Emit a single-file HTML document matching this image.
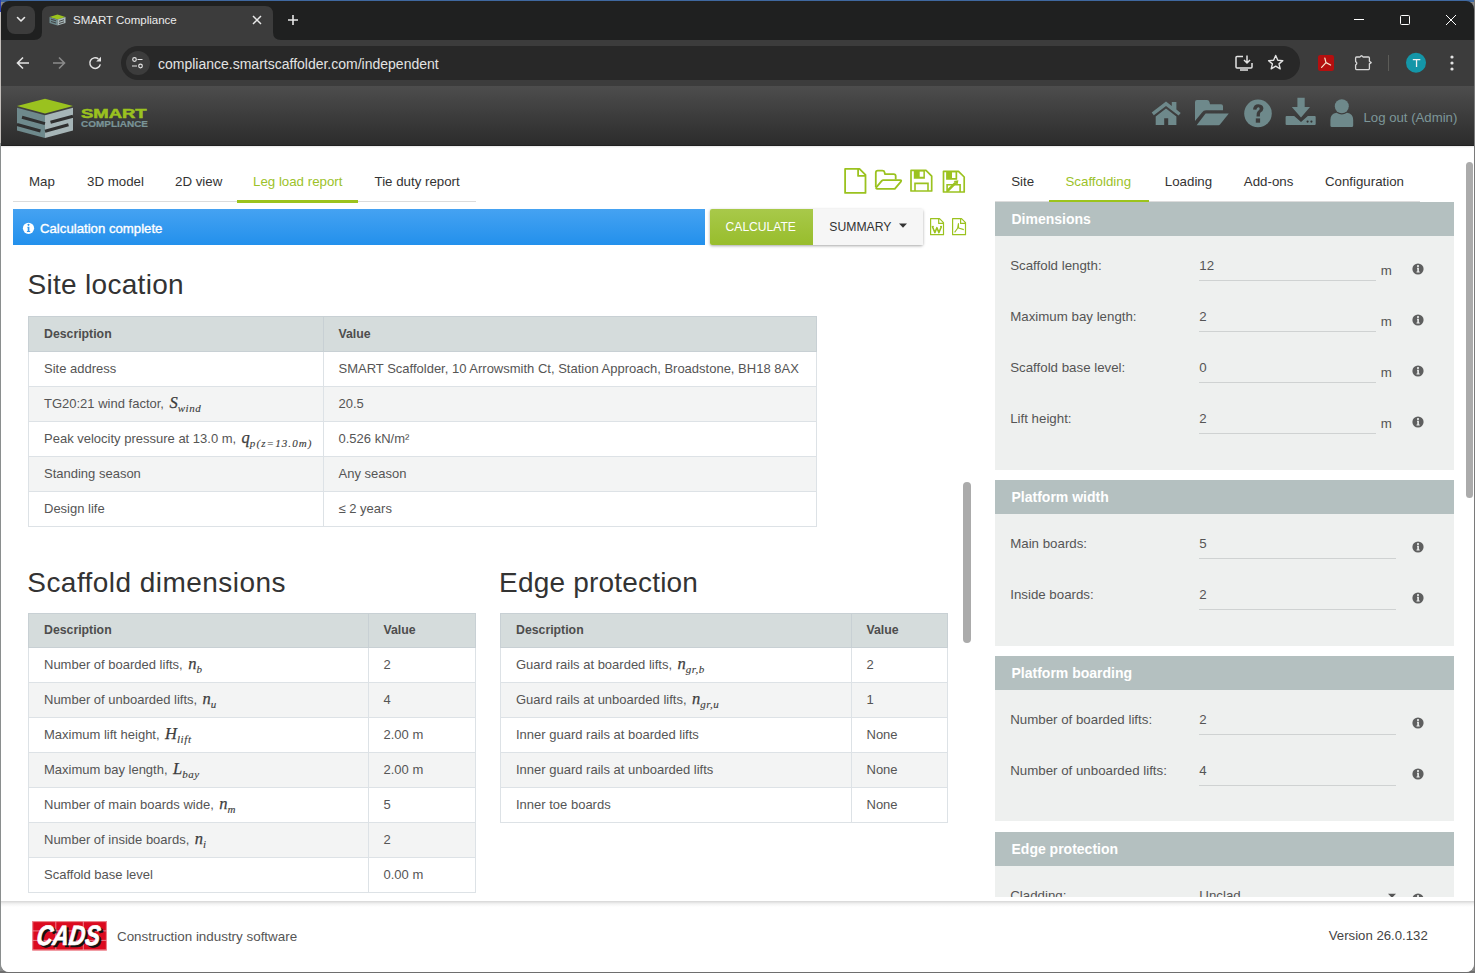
<!DOCTYPE html>
<html><head><meta charset="utf-8">
<style>
*{box-sizing:border-box;margin:0;padding:0}
html,body{width:1475px;height:973px;overflow:hidden;background:#8a8a8a;font-family:"Liberation Sans",sans-serif}
.a{position:absolute}
.t{position:absolute;white-space:nowrap;line-height:1}
svg{position:absolute;overflow:visible}
#win{position:absolute;left:0;top:0;width:1475px;height:973px;clip-path:inset(1px 1px 1px 1px round 8px);background:#1f2020}
</style></head>
<body>
<!-- desktop edges -->
<div class="a" style="left:0;top:0;width:1475px;height:2px;background:#3f68a0"></div>
<div class="a" style="left:0;top:0;width:1px;height:12px;background:#2d3fae"></div>
<div class="a" style="left:0;top:12px;width:1px;height:131px;background:#c4bfbb"></div>
<div class="a" style="left:0;top:143px;width:1px;height:830px;background:#8a8e8e"></div>
<div class="a" style="left:1474px;top:0;width:1px;height:973px;background:#7a7a7a"></div>
<div class="a" style="left:0;top:971px;width:1475px;height:2px;background:#6e6e6e"></div>

<div id="win">
  <!-- tab strip -->
  <div class="a" style="left:7px;top:6px;width:28px;height:28px;border-radius:8px;background:#3c3c3c"></div>
  <svg style="left:0;top:0" width="1475" height="40">
    <path d="M17.5 17.5 L21 21 L24.5 17.5" stroke="#e8e8e8" stroke-width="1.6" fill="none" stroke-linecap="round" stroke-linejoin="round"/>
    <!-- active tab shape -->
    <path d="M34 40 Q42 40 42 32 L42 14 Q42 6 50 6 L265 6 Q273 6 273 14 L273 32 Q273 40 281 40 Z" fill="#3c3c3c"/>
    <!-- close x -->
    <path d="M253 16 L261 24 M261 16 L253 24" stroke="#e8e8e8" stroke-width="1.5"/>
    <!-- plus -->
    <path d="M293 15 L293 25 M288 20 L298 20" stroke="#e8e8e8" stroke-width="1.6"/>
    <!-- window controls -->
    <path d="M1354 19.5 L1364 19.5" stroke="#fff" stroke-width="1"/>
    <rect x="1400.5" y="15.5" width="9" height="9" rx="1" stroke="#fff" stroke-width="1" fill="none"/>
    <path d="M1446 15 L1456 25 M1456 15 L1446 25" stroke="#fff" stroke-width="1"/>
  </svg>
  <!-- favicon -->
  <svg style="left:49px;top:14px" width="17" height="12" viewBox="0 0 17 12">
    <path d="M0.5 3 L8.5 0.5 L16.5 3 L8.5 5.5 Z" fill="#9bc31c"/>
    <path d="M0.5 3 L8.5 5.5 L8.5 11.5 L0.5 9 Z" fill="#6f8a8e"/>
    <path d="M8.5 5.5 L16.5 3 L16.5 9 L8.5 11.5 Z" fill="#a9b8ba"/>
    <path d="M2 5.2 L7 6.8 M2 7.5 L7 9 M10 7.3 L15 5.7 M10 9.5 L15 7.9" stroke="#3c3c3c" stroke-width="0.9"/>
  </svg>
  <div class="t" style="left:73px;top:15.2px;font-size:11.5px;color:#ececec">SMART Compliance</div>

  <!-- toolbar -->
  <div class="a" style="left:0;top:40px;width:1475px;height:46px;background:#3c3c3c"></div>
  <div class="a" style="left:121px;top:46px;width:1179px;height:34px;border-radius:17px;background:#282828"></div>
  <div class="a" style="left:126px;top:51px;width:24px;height:24px;border-radius:12px;background:#3c3c3c"></div>
  <svg style="left:0;top:40px" width="1475" height="46">
    <!-- back -->
    <path d="M29 23 L17.5 23 M23 17.5 L17.5 23 L23 28.5" stroke="#e3e3e3" stroke-width="1.6" fill="none"/>
    <!-- forward -->
    <path d="M53 23 L64.5 23 M59 17.5 L64.5 23 L59 28.5" stroke="#8a8a8a" stroke-width="1.6" fill="none"/>
    <!-- reload -->
    <path d="M98.4 18.9 A5.3 5.3 0 1 0 100.3 24.3" stroke="#e3e3e3" stroke-width="1.5" fill="none"/>
    <path d="M96.2 21.6 L101 21.6 L101 16.8 Z" fill="#e3e3e3"/>
    <!-- tune icon -->
    <circle cx="134.5" cy="19.5" r="1.8" stroke="#e3e3e3" stroke-width="1.2" fill="none"/>
    <path d="M137.5 19.5 L142.5 19.5 M132 26 L137 26" stroke="#e3e3e3" stroke-width="1.2"/>
    <circle cx="140.5" cy="26" r="1.8" stroke="#e3e3e3" stroke-width="1.2" fill="none"/>
    <!-- install -->
    <path d="M1243 16.5 L1237 16.5 Q1236 16.5 1236 17.5 L1236 27 Q1236 28 1237 28 L1251 28 Q1252 28 1252 27 L1252 23" stroke="#e3e3e3" stroke-width="1.5" fill="none"/>
    <path d="M1240 30 L1248 30" stroke="#e3e3e3" stroke-width="1.5"/>
    <path d="M1247 15.5 L1247 23 M1244 20 L1247 23 L1250 20" stroke="#e3e3e3" stroke-width="1.5" fill="none"/>
    <!-- star -->
    <path d="M1275.7 15.5 L1277.8 20.2 L1282.8 20.6 L1279 23.9 L1280.2 28.8 L1275.7 26.2 L1271.2 28.8 L1272.4 23.9 L1268.6 20.6 L1273.6 20.2 Z" stroke="#e3e3e3" stroke-width="1.4" fill="none" stroke-linejoin="round"/>
    <!-- pdf ext -->
    <rect x="1318" y="15" width="16" height="16" rx="2.2" fill="#b40f0f"/>
    <path d="M1326 22.6 L1324.8 18 M1326 22.6 L1321.6 27.4 M1326 22.6 L1330.6 25" stroke="#f4e6d0" stroke-width="1.2" fill="none" stroke-linecap="round"/>
    <!-- puzzle -->
    <path d="M1356.5 17 L1360 17 Q1361.5 14.5 1363 17 L1368.5 17 Q1369.4 17 1369.4 18 L1369.4 21.3 L1371.2 22.6 L1369.4 23.9 L1369.4 28.6 Q1369.4 29.6 1368.5 29.6 L1356.5 29.6 Q1355.6 29.6 1355.6 28.6 L1355.6 25 Q1358 23.3 1355.6 21.6 L1355.6 18 Q1355.6 17 1356.5 17 Z" stroke="#d6d6d6" stroke-width="1.3" fill="none" stroke-linejoin="round"/>
    <!-- separator -->
    <path d="M1388.5 15 L1388.5 31" stroke="#5c5c58" stroke-width="1"/>
    <!-- avatar -->
    <circle cx="1416" cy="22.7" r="10" fill="#1496a8"/>
    <path d="M1412.8 19.6 L1420.3 19.6 M1416.55 19.6 L1416.55 26.9" stroke="#f0f0f0" stroke-width="1.3"/>
    <!-- menu -->
    <circle cx="1452" cy="17" r="1.6" fill="#e3e3e3"/>
    <circle cx="1452" cy="23" r="1.6" fill="#e3e3e3"/>
    <circle cx="1452" cy="29" r="1.6" fill="#e3e3e3"/>
  </svg>
  <div class="t" style="left:158px;top:56.8px;font-size:14px;color:#e3e3e3">compliance.smartscaffolder.com/independent</div>

<div class="a" style="left:0;top:86px;width:1475px;height:60px;background:linear-gradient(#4d4d4d,#2b2b2b)"></div>
<svg style="left:0;top:0" width="1475" height="146">
 <path d="M17 106 L45 98.8 L73 106 L45 113.5 Z" fill="#9ac21f"/>
 <path d="M17 107.8 L45 115.3 L45 138 L17 130.5 Z" fill="#6e898c"/>
 <path d="M45 115.3 L73 107.8 L73 130.5 L45 138 Z" fill="#a6b5b7"/>
 <path d="M22 117.3 L45 123.6 M17 124.5 L40.5 131 M50.5 122.3 L73 116.2 M45 131.2 L68.5 124.8" stroke="#2f2f2f" stroke-width="3"/>
</svg>
<div class="t" style="left:81px;top:108.3px;font-size:12.3px;font-weight:bold;color:#9ac21f;-webkit-text-stroke:0.5px #9ac21f;transform:scaleX(1.5);transform-origin:0 0;letter-spacing:0">SMART</div>
<div class="t" style="left:81px;top:119.5px;font-size:8.6px;font-weight:bold;color:#7a9497;-webkit-text-stroke:0.2px #7a9497;transform:scaleX(1.16);transform-origin:0 0">COMPLIANCE</div>
<svg style="left:0;top:0" width="1475" height="146">
 <!-- home -->
 <path d="M1151.7 112.5 L1166 101.5 L1171.8 106 L1171.8 102 L1176.4 102 L1176.4 109.6 L1180.7 112.9 L1178.6 115.6 L1166 105.9 L1153.8 115.3 Z" fill="#6e898b"/>
 <path d="M1155.7 116.6 L1166 108.6 L1176.4 116.6 L1176.4 125 L1168.2 125 L1168.2 118.2 L1164.2 118.2 L1164.2 125 L1155.7 125 Z" fill="#6e898b"/>
 <!-- folder open -->
 <path d="M1195 102 Q1195 100 1197 100 L1207 100 Q1209 100 1209.5 102 L1210 104.2 L1221 104.2 Q1223 104.2 1223 106.2 L1223 110.3 L1206 110.3 Q1203.5 110.3 1202 112.5 L1195 121 Z" fill="#6e898b"/>
 <path d="M1205.6 113.6 L1228.8 113.6 L1220 124.6 Q1219.4 125.2 1218.5 125.2 L1196.6 125.2 Z" fill="#6e898b"/>
 <!-- question circle -->
 <circle cx="1258" cy="113.4" r="13.8" fill="#6e898b"/>
 <path d="M1253 109.6 Q1253.6 104.2 1258.5 104.3 Q1263.4 104.6 1263.4 108.6 Q1263.2 111.4 1260.5 112.6 Q1259.8 113.1 1259.9 116.4 L1256.5 116.4 Q1256.3 112.6 1257.9 111.1 Q1259.6 110 1259.7 108.7 Q1259.5 107.3 1258.3 107.3 Q1256.9 107.4 1256.3 109.8 Z" fill="#3c3c3c"/>
 <rect x="1255.8" y="118.4" width="4.3" height="4.3" fill="#3c3c3c"/>
 <!-- download -->
 <path d="M1297.4 97.7 L1304.7 97.7 L1304.7 107 L1310 107 L1301 117.5 L1291.8 107 L1297.4 107 Z" fill="#6e898b"/>
 <path d="M1285.6 117 Q1285.6 116 1286.6 116 L1294.2 116 L1301 122 L1307.8 116 L1314.7 116 Q1315.7 116 1315.7 117 L1315.7 124 Q1315.7 125 1314.7 125 L1286.6 125 Q1285.6 125 1285.6 124 Z" fill="#6e898b"/>
 <circle cx="1307.6" cy="121.6" r="1.1" fill="#333"/><circle cx="1311.4" cy="121.6" r="1.1" fill="#333"/>
 <!-- user -->
 <circle cx="1341.8" cy="106.3" r="7" fill="#6e898b"/>
 <path d="M1336.5 112.8 Q1341.8 116 1347 112.8 Q1353.2 113.5 1353.2 120 L1353.2 125.5 Q1353.2 127 1351.7 127 L1331.9 127 Q1330.4 127 1330.4 125.5 L1330.4 120 Q1330.4 113.5 1336.5 112.8 Z" fill="#6e898b"/>
</svg>
<div class="t" style="left:1363.5px;top:111.13px;font-size:13.2px;color:#7d9799;">Log out (Admin)</div>
<div class="a" style="left:0;top:146px;width:1475px;height:827px;background:#fff"></div>
<div class="a" style="left:0;top:145px;width:1475px;height:1px;background:#202020"></div>
<div class="a" style="left:0;top:146px;width:1475px;height:2px;background:linear-gradient(#e6e6e6,#fff)"></div>
<div class="t" style="left:29px;top:174.74px;font-size:13.3px;color:#333;">Map</div>
<div class="t" style="left:87px;top:174.74px;font-size:13.3px;color:#333;">3D model</div>
<div class="t" style="left:175px;top:174.74px;font-size:13.3px;color:#333;">2D view</div>
<div class="t" style="left:253px;top:174.74px;font-size:13.3px;color:#9cc22a;">Leg load report</div>
<div class="t" style="left:374.5px;top:174.74px;font-size:13.3px;color:#333;">Tie duty report</div>
<div class="a" style="left:13px;top:201px;width:463px;height:1px;background:#dcdcdc"></div>
<div class="a" style="left:237px;top:200px;width:121px;height:2.5px;background:#9cc31c"></div>
<div class="a" style="left:13px;top:209px;width:692px;height:36px;background:linear-gradient(#45a2f2,#2390ec)"></div>
<svg style="left:0;top:0" width="40" height="250"><circle cx="28.5" cy="228.3" r="5.6" fill="#fff"/><path d="M27.6 226.8 L29.4 226.8 L29.4 231 L30.2 231 L30.2 231.9 L26.9 231.9 L26.9 231 L27.7 231 L27.7 227.7 L27.1 227.7 Z M28.5 223.8 a1 1 0 1 0 0.01 0" fill="#2f97ee"/></svg>
<div class="t" style="left:40px;top:221.83px;font-size:13.2px;color:#fff;-webkit-text-stroke:0.35px #fff">Calculation complete</div>
<div class="a" style="left:710px;top:209px;width:213px;height:36px;border-radius:2px;box-shadow:0 1px 3px rgba(0,0,0,0.35)"></div>
<div class="a" style="left:710px;top:209px;width:103px;height:36px;border-radius:2px 0 0 2px;background:linear-gradient(#a8c94a,#98bd2c)"></div>
<div class="a" style="left:813px;top:209px;width:110px;height:36px;background:#f6f6f6"></div>
<div class="t" style="left:725.6px;top:220.76px;font-size:12.1px;color:#fff;">CALCULATE</div>
<div class="t" style="left:829.3px;top:220.67px;font-size:12.2px;color:#333;">SUMMARY</div>
<svg style="left:0;top:0" width="1000" height="250"><path d="M899 223.6 L907 223.6 L903 227.8 Z" fill="#333"/></svg>
<div class="t" style="left:27.5px;top:271.30px;font-size:28px;color:#333;letter-spacing:0.3px">Site location</div>
<div class="a" style="left:28px;top:316px;width:789px;height:211px;border:1px solid #dde2e6;background:#fff"></div>
<div class="a" style="left:28px;top:316px;width:789px;height:36px;border:1px solid #c8d0d4;background:#d5dcdc"></div>
<div class="a" style="left:29px;top:352px;width:787px;height:34px;background:#fff"></div>
<div class="a" style="left:29px;top:387px;width:787px;height:34px;background:#f3f4f4"></div>
<div class="a" style="left:29px;top:386px;width:787px;height:1px;background:#dde2e6"></div>
<div class="a" style="left:29px;top:422px;width:787px;height:34px;background:#fff"></div>
<div class="a" style="left:29px;top:421px;width:787px;height:1px;background:#dde2e6"></div>
<div class="a" style="left:29px;top:457px;width:787px;height:34px;background:#f3f4f4"></div>
<div class="a" style="left:29px;top:456px;width:787px;height:1px;background:#dde2e6"></div>
<div class="a" style="left:29px;top:492px;width:787px;height:34px;background:#fff"></div>
<div class="a" style="left:29px;top:491px;width:787px;height:1px;background:#dde2e6"></div>
<div class="a" style="left:323px;top:317px;width:1px;height:35px;background:#c8d0d4"></div>
<div class="a" style="left:323px;top:352px;width:1px;height:175px;background:#dde2e6"></div>
<div class="t" style="left:44px;top:327.99px;font-size:12.3px;color:#4d4d4d;font-weight:bold;">Description</div>
<div class="t" style="left:338.5px;top:327.99px;font-size:12.3px;color:#4d4d4d;font-weight:bold;">Value</div>
<div class="t" style="left:44px;top:362.00px;font-size:13px;color:#555;">Site address</div>
<div class="t" style="left:338.5px;top:362.00px;font-size:13px;color:#555;">SMART Scaffolder, 10 Arrowsmith Ct, Station Approach, Broadstone, BH18 8AX</div>
<div class="t" style="left:44px;top:397.00px;font-size:13px;color:#555;">TG20:21 wind factor, <span style="font-family:'Liberation Serif';font-style:italic;font-size:16.5px;color:#3c3c3c;margin-left:1.8px;line-height:0;-webkit-text-stroke:0.25px #3c3c3c">S</span><span style="font-family:'Liberation Serif';font-style:italic;font-size:11px;color:#3c3c3c;line-height:0;position:relative;top:3.5px;letter-spacing:0.6px;-webkit-text-stroke:0.12px #3c3c3c">wind</span></div>
<div class="t" style="left:338.5px;top:397.00px;font-size:13px;color:#555;">20.5</div>
<div class="t" style="left:44px;top:432.00px;font-size:13px;color:#555;">Peak velocity pressure at 13.0 m, <span style="font-family:'Liberation Serif';font-style:italic;font-size:16.5px;color:#3c3c3c;margin-left:1.8px;line-height:0;-webkit-text-stroke:0.25px #3c3c3c">q</span><span style="font-family:'Liberation Serif';font-style:italic;font-size:11px;color:#3c3c3c;line-height:0;position:relative;top:3.5px;letter-spacing:1.1px;-webkit-text-stroke:0.12px #3c3c3c">p(z=13.0m)</span></div>
<div class="t" style="left:338.5px;top:432.00px;font-size:13px;color:#555;">0.526 kN/m²</div>
<div class="t" style="left:44px;top:467.00px;font-size:13px;color:#555;">Standing season</div>
<div class="t" style="left:338.5px;top:467.00px;font-size:13px;color:#555;">Any season</div>
<div class="t" style="left:44px;top:502.00px;font-size:13px;color:#555;">Design life</div>
<div class="t" style="left:338.5px;top:502.00px;font-size:13px;color:#555;">≤ 2 years</div>
<div class="t" style="left:27.3px;top:568.80px;font-size:28px;color:#333;letter-spacing:0.45px">Scaffold dimensions</div>
<div class="a" style="left:28px;top:613px;width:448px;height:280px;border:1px solid #dde2e6;background:#fff"></div>
<div class="a" style="left:28px;top:613px;width:448px;height:35px;border:1px solid #c8d0d4;background:#d5dcdc"></div>
<div class="a" style="left:29px;top:648px;width:446px;height:34px;background:#fff"></div>
<div class="a" style="left:29px;top:683px;width:446px;height:34px;background:#f3f4f4"></div>
<div class="a" style="left:29px;top:682px;width:446px;height:1px;background:#dde2e6"></div>
<div class="a" style="left:29px;top:718px;width:446px;height:34px;background:#fff"></div>
<div class="a" style="left:29px;top:717px;width:446px;height:1px;background:#dde2e6"></div>
<div class="a" style="left:29px;top:753px;width:446px;height:34px;background:#f3f4f4"></div>
<div class="a" style="left:29px;top:752px;width:446px;height:1px;background:#dde2e6"></div>
<div class="a" style="left:29px;top:788px;width:446px;height:34px;background:#fff"></div>
<div class="a" style="left:29px;top:787px;width:446px;height:1px;background:#dde2e6"></div>
<div class="a" style="left:29px;top:823px;width:446px;height:34px;background:#f3f4f4"></div>
<div class="a" style="left:29px;top:822px;width:446px;height:1px;background:#dde2e6"></div>
<div class="a" style="left:29px;top:858px;width:446px;height:34px;background:#fff"></div>
<div class="a" style="left:29px;top:857px;width:446px;height:1px;background:#dde2e6"></div>
<div class="a" style="left:368px;top:614px;width:1px;height:34px;background:#c8d0d4"></div>
<div class="a" style="left:368px;top:648px;width:1px;height:245px;background:#dde2e6"></div>
<div class="t" style="left:44px;top:623.99px;font-size:12.3px;color:#4d4d4d;font-weight:bold;">Description</div>
<div class="t" style="left:383.5px;top:623.99px;font-size:12.3px;color:#4d4d4d;font-weight:bold;">Value</div>
<div class="t" style="left:44px;top:658.00px;font-size:13px;color:#555;">Number of boarded lifts, <span style="font-family:'Liberation Serif';font-style:italic;font-size:16.5px;color:#3c3c3c;margin-left:1.8px;line-height:0;-webkit-text-stroke:0.25px #3c3c3c">n</span><span style="font-family:'Liberation Serif';font-style:italic;font-size:11px;color:#3c3c3c;line-height:0;position:relative;top:3.5px;letter-spacing:0.6px;-webkit-text-stroke:0.12px #3c3c3c">b</span></div>
<div class="t" style="left:383.5px;top:658.00px;font-size:13px;color:#555;">2</div>
<div class="t" style="left:44px;top:693.00px;font-size:13px;color:#555;">Number of unboarded lifts, <span style="font-family:'Liberation Serif';font-style:italic;font-size:16.5px;color:#3c3c3c;margin-left:1.8px;line-height:0;-webkit-text-stroke:0.25px #3c3c3c">n</span><span style="font-family:'Liberation Serif';font-style:italic;font-size:11px;color:#3c3c3c;line-height:0;position:relative;top:3.5px;letter-spacing:0.6px;-webkit-text-stroke:0.12px #3c3c3c">u</span></div>
<div class="t" style="left:383.5px;top:693.00px;font-size:13px;color:#555;">4</div>
<div class="t" style="left:44px;top:728.00px;font-size:13px;color:#555;">Maximum lift height, <span style="font-family:'Liberation Serif';font-style:italic;font-size:16.5px;color:#3c3c3c;margin-left:1.8px;line-height:0;-webkit-text-stroke:0.25px #3c3c3c">H</span><span style="font-family:'Liberation Serif';font-style:italic;font-size:11px;color:#3c3c3c;line-height:0;position:relative;top:3.5px;letter-spacing:0.6px;-webkit-text-stroke:0.12px #3c3c3c">lift</span></div>
<div class="t" style="left:383.5px;top:728.00px;font-size:13px;color:#555;">2.00 m</div>
<div class="t" style="left:44px;top:763.00px;font-size:13px;color:#555;">Maximum bay length, <span style="font-family:'Liberation Serif';font-style:italic;font-size:16.5px;color:#3c3c3c;margin-left:1.8px;line-height:0;-webkit-text-stroke:0.25px #3c3c3c">L</span><span style="font-family:'Liberation Serif';font-style:italic;font-size:11px;color:#3c3c3c;line-height:0;position:relative;top:3.5px;letter-spacing:0.6px;-webkit-text-stroke:0.12px #3c3c3c">bay</span></div>
<div class="t" style="left:383.5px;top:763.00px;font-size:13px;color:#555;">2.00 m</div>
<div class="t" style="left:44px;top:798.00px;font-size:13px;color:#555;">Number of main boards wide, <span style="font-family:'Liberation Serif';font-style:italic;font-size:16.5px;color:#3c3c3c;margin-left:1.8px;line-height:0;-webkit-text-stroke:0.25px #3c3c3c">n</span><span style="font-family:'Liberation Serif';font-style:italic;font-size:11px;color:#3c3c3c;line-height:0;position:relative;top:3.5px;letter-spacing:0.6px;-webkit-text-stroke:0.12px #3c3c3c">m</span></div>
<div class="t" style="left:383.5px;top:798.00px;font-size:13px;color:#555;">5</div>
<div class="t" style="left:44px;top:833.00px;font-size:13px;color:#555;">Number of inside boards, <span style="font-family:'Liberation Serif';font-style:italic;font-size:16.5px;color:#3c3c3c;margin-left:1.8px;line-height:0;-webkit-text-stroke:0.25px #3c3c3c">n</span><span style="font-family:'Liberation Serif';font-style:italic;font-size:11px;color:#3c3c3c;line-height:0;position:relative;top:3.5px;letter-spacing:0.6px;-webkit-text-stroke:0.12px #3c3c3c">i</span></div>
<div class="t" style="left:383.5px;top:833.00px;font-size:13px;color:#555;">2</div>
<div class="t" style="left:44px;top:868.00px;font-size:13px;color:#555;">Scaffold base level</div>
<div class="t" style="left:383.5px;top:868.00px;font-size:13px;color:#555;">0.00 m</div>
<div class="t" style="left:499px;top:568.80px;font-size:28px;color:#333;letter-spacing:0.2px">Edge protection</div>
<div class="a" style="left:500px;top:613px;width:448px;height:210px;border:1px solid #dde2e6;background:#fff"></div>
<div class="a" style="left:500px;top:613px;width:448px;height:35px;border:1px solid #c8d0d4;background:#d5dcdc"></div>
<div class="a" style="left:501px;top:648px;width:446px;height:34px;background:#fff"></div>
<div class="a" style="left:501px;top:683px;width:446px;height:34px;background:#f3f4f4"></div>
<div class="a" style="left:501px;top:682px;width:446px;height:1px;background:#dde2e6"></div>
<div class="a" style="left:501px;top:718px;width:446px;height:34px;background:#fff"></div>
<div class="a" style="left:501px;top:717px;width:446px;height:1px;background:#dde2e6"></div>
<div class="a" style="left:501px;top:753px;width:446px;height:34px;background:#f3f4f4"></div>
<div class="a" style="left:501px;top:752px;width:446px;height:1px;background:#dde2e6"></div>
<div class="a" style="left:501px;top:788px;width:446px;height:34px;background:#fff"></div>
<div class="a" style="left:501px;top:787px;width:446px;height:1px;background:#dde2e6"></div>
<div class="a" style="left:851px;top:614px;width:1px;height:34px;background:#c8d0d4"></div>
<div class="a" style="left:851px;top:648px;width:1px;height:175px;background:#dde2e6"></div>
<div class="t" style="left:516px;top:623.99px;font-size:12.3px;color:#4d4d4d;font-weight:bold;">Description</div>
<div class="t" style="left:866.5px;top:623.99px;font-size:12.3px;color:#4d4d4d;font-weight:bold;">Value</div>
<div class="t" style="left:516px;top:658.00px;font-size:13px;color:#555;">Guard rails at boarded lifts, <span style="font-family:'Liberation Serif';font-style:italic;font-size:16.5px;color:#3c3c3c;margin-left:1.8px;line-height:0;-webkit-text-stroke:0.25px #3c3c3c">n</span><span style="font-family:'Liberation Serif';font-style:italic;font-size:11px;color:#3c3c3c;line-height:0;position:relative;top:3.5px;letter-spacing:0.6px;-webkit-text-stroke:0.12px #3c3c3c">gr,b</span></div>
<div class="t" style="left:866.5px;top:658.00px;font-size:13px;color:#555;">2</div>
<div class="t" style="left:516px;top:693.00px;font-size:13px;color:#555;">Guard rails at unboarded lifts, <span style="font-family:'Liberation Serif';font-style:italic;font-size:16.5px;color:#3c3c3c;margin-left:1.8px;line-height:0;-webkit-text-stroke:0.25px #3c3c3c">n</span><span style="font-family:'Liberation Serif';font-style:italic;font-size:11px;color:#3c3c3c;line-height:0;position:relative;top:3.5px;letter-spacing:0.6px;-webkit-text-stroke:0.12px #3c3c3c">gr,u</span></div>
<div class="t" style="left:866.5px;top:693.00px;font-size:13px;color:#555;">1</div>
<div class="t" style="left:516px;top:728.00px;font-size:13px;color:#555;">Inner guard rails at boarded lifts</div>
<div class="t" style="left:866.5px;top:728.00px;font-size:13px;color:#555;">None</div>
<div class="t" style="left:516px;top:763.00px;font-size:13px;color:#555;">Inner guard rails at unboarded lifts</div>
<div class="t" style="left:866.5px;top:763.00px;font-size:13px;color:#555;">None</div>
<div class="t" style="left:516px;top:798.00px;font-size:13px;color:#555;">Inner toe boards</div>
<div class="t" style="left:866.5px;top:798.00px;font-size:13px;color:#555;">None</div>
<div class="a" style="left:963px;top:482px;width:8px;height:161px;border-radius:4px;background:#ababab"></div>
<div class="t" style="left:1011.2px;top:174.74px;font-size:13.3px;color:#333;">Site</div>
<div class="t" style="left:1065.5px;top:174.74px;font-size:13.3px;color:#9cc22a;">Scaffolding</div>
<div class="t" style="left:1164.8px;top:174.74px;font-size:13.3px;color:#333;">Loading</div>
<div class="t" style="left:1243.8px;top:174.74px;font-size:13.3px;color:#333;">Add-ons</div>
<div class="t" style="left:1324.9px;top:174.74px;font-size:13.3px;color:#333;">Configuration</div>
<div class="a" style="left:995px;top:201px;width:425px;height:1px;background:#dcdcdc"></div>
<div class="a" style="left:1049px;top:200px;width:100px;height:2px;background:#9cc31c"></div>
<div class="a" style="left:995px;top:202px;width:459px;height:695px;overflow:hidden">
<div class="a" style="left:0;top:0px;width:459px;height:34px;background:#b4c0c0"></div>
<div class="a" style="left:0;top:34px;width:459px;height:233.5px;background:#eef0ef"></div>
<div class="t" style="left:16.5px;top:10.15px;font-size:14px;color:#fff;font-weight:bold;">Dimensions</div>
<div class="t" style="left:15.2px;top:56.74px;font-size:13.3px;color:#555;">Scaffold length:</div>
<div class="t" style="left:204.3px;top:56.74px;font-size:13.3px;color:#555;">12</div>
<div class="a" style="left:204px;top:78px;width:177px;height:1px;background:#cfd2d2"></div>
<div class="t" style="left:385.7px;top:61.74px;font-size:13.3px;color:#555;">m</div>
<svg style="left:416.5px;top:60.8px" width="12" height="12" viewBox="0 0 12 12"><circle cx="6" cy="6" r="5.6" fill="#5e5f5f"/><path d="M5 4.8 L6.9 4.8 L6.9 8.6 L7.7 8.6 L7.7 9.5 L4.5 9.5 L4.5 8.6 L5.3 8.6 L5.3 5.7 L5 5.7 Z" fill="#eef0ef"/><circle cx="6" cy="3.1" r="1.05" fill="#eef0ef"/></svg>
<div class="t" style="left:15.2px;top:107.74px;font-size:13.3px;color:#555;">Maximum bay length:</div>
<div class="t" style="left:204.3px;top:107.74px;font-size:13.3px;color:#555;">2</div>
<div class="a" style="left:204px;top:129px;width:177px;height:1px;background:#cfd2d2"></div>
<div class="t" style="left:385.7px;top:112.74px;font-size:13.3px;color:#555;">m</div>
<svg style="left:416.5px;top:111.8px" width="12" height="12" viewBox="0 0 12 12"><circle cx="6" cy="6" r="5.6" fill="#5e5f5f"/><path d="M5 4.8 L6.9 4.8 L6.9 8.6 L7.7 8.6 L7.7 9.5 L4.5 9.5 L4.5 8.6 L5.3 8.6 L5.3 5.7 L5 5.7 Z" fill="#eef0ef"/><circle cx="6" cy="3.1" r="1.05" fill="#eef0ef"/></svg>
<div class="t" style="left:15.2px;top:158.74px;font-size:13.3px;color:#555;">Scaffold base level:</div>
<div class="t" style="left:204.3px;top:158.74px;font-size:13.3px;color:#555;">0</div>
<div class="a" style="left:204px;top:180px;width:177px;height:1px;background:#cfd2d2"></div>
<div class="t" style="left:385.7px;top:163.74px;font-size:13.3px;color:#555;">m</div>
<svg style="left:416.5px;top:162.8px" width="12" height="12" viewBox="0 0 12 12"><circle cx="6" cy="6" r="5.6" fill="#5e5f5f"/><path d="M5 4.8 L6.9 4.8 L6.9 8.6 L7.7 8.6 L7.7 9.5 L4.5 9.5 L4.5 8.6 L5.3 8.6 L5.3 5.7 L5 5.7 Z" fill="#eef0ef"/><circle cx="6" cy="3.1" r="1.05" fill="#eef0ef"/></svg>
<div class="t" style="left:15.2px;top:209.74px;font-size:13.3px;color:#555;">Lift height:</div>
<div class="t" style="left:204.3px;top:209.74px;font-size:13.3px;color:#555;">2</div>
<div class="a" style="left:204px;top:231px;width:177px;height:1px;background:#cfd2d2"></div>
<div class="t" style="left:385.7px;top:214.74px;font-size:13.3px;color:#555;">m</div>
<svg style="left:416.5px;top:213.8px" width="12" height="12" viewBox="0 0 12 12"><circle cx="6" cy="6" r="5.6" fill="#5e5f5f"/><path d="M5 4.8 L6.9 4.8 L6.9 8.6 L7.7 8.6 L7.7 9.5 L4.5 9.5 L4.5 8.6 L5.3 8.6 L5.3 5.7 L5 5.7 Z" fill="#eef0ef"/><circle cx="6" cy="3.1" r="1.05" fill="#eef0ef"/></svg>
<div class="a" style="left:0;top:278px;width:459px;height:34px;background:#b4c0c0"></div>
<div class="a" style="left:0;top:312px;width:459px;height:131.5px;background:#eef0ef"></div>
<div class="t" style="left:16.5px;top:288.15px;font-size:14px;color:#fff;font-weight:bold;">Platform width</div>
<div class="t" style="left:15.2px;top:334.74px;font-size:13.3px;color:#555;">Main boards:</div>
<div class="t" style="left:204.3px;top:334.74px;font-size:13.3px;color:#555;">5</div>
<div class="a" style="left:204px;top:356px;width:197px;height:1px;background:#cfd2d2"></div>
<svg style="left:416.5px;top:338.8px" width="12" height="12" viewBox="0 0 12 12"><circle cx="6" cy="6" r="5.6" fill="#5e5f5f"/><path d="M5 4.8 L6.9 4.8 L6.9 8.6 L7.7 8.6 L7.7 9.5 L4.5 9.5 L4.5 8.6 L5.3 8.6 L5.3 5.7 L5 5.7 Z" fill="#eef0ef"/><circle cx="6" cy="3.1" r="1.05" fill="#eef0ef"/></svg>
<div class="t" style="left:15.2px;top:385.74px;font-size:13.3px;color:#555;">Inside boards:</div>
<div class="t" style="left:204.3px;top:385.74px;font-size:13.3px;color:#555;">2</div>
<div class="a" style="left:204px;top:407px;width:197px;height:1px;background:#cfd2d2"></div>
<svg style="left:416.5px;top:389.8px" width="12" height="12" viewBox="0 0 12 12"><circle cx="6" cy="6" r="5.6" fill="#5e5f5f"/><path d="M5 4.8 L6.9 4.8 L6.9 8.6 L7.7 8.6 L7.7 9.5 L4.5 9.5 L4.5 8.6 L5.3 8.6 L5.3 5.7 L5 5.7 Z" fill="#eef0ef"/><circle cx="6" cy="3.1" r="1.05" fill="#eef0ef"/></svg>
<div class="a" style="left:0;top:454.29999999999995px;width:459px;height:34px;background:#b4c0c0"></div>
<div class="a" style="left:0;top:488.29999999999995px;width:459px;height:131.20000000000005px;background:#eef0ef"></div>
<div class="t" style="left:16.5px;top:464.45px;font-size:14px;color:#fff;font-weight:bold;">Platform boarding</div>
<div class="t" style="left:15.2px;top:511.04px;font-size:13.3px;color:#555;">Number of boarded lifts:</div>
<div class="t" style="left:204.3px;top:511.04px;font-size:13.3px;color:#555;">2</div>
<div class="a" style="left:204px;top:532.3px;width:197px;height:1px;background:#cfd2d2"></div>
<svg style="left:416.5px;top:515.0999999999999px" width="12" height="12" viewBox="0 0 12 12"><circle cx="6" cy="6" r="5.6" fill="#5e5f5f"/><path d="M5 4.8 L6.9 4.8 L6.9 8.6 L7.7 8.6 L7.7 9.5 L4.5 9.5 L4.5 8.6 L5.3 8.6 L5.3 5.7 L5 5.7 Z" fill="#eef0ef"/><circle cx="6" cy="3.1" r="1.05" fill="#eef0ef"/></svg>
<div class="t" style="left:15.2px;top:562.04px;font-size:13.3px;color:#555;">Number of unboarded lifts:</div>
<div class="t" style="left:204.3px;top:562.04px;font-size:13.3px;color:#555;">4</div>
<div class="a" style="left:204px;top:583.3px;width:197px;height:1px;background:#cfd2d2"></div>
<svg style="left:416.5px;top:566.0999999999999px" width="12" height="12" viewBox="0 0 12 12"><circle cx="6" cy="6" r="5.6" fill="#5e5f5f"/><path d="M5 4.8 L6.9 4.8 L6.9 8.6 L7.7 8.6 L7.7 9.5 L4.5 9.5 L4.5 8.6 L5.3 8.6 L5.3 5.7 L5 5.7 Z" fill="#eef0ef"/><circle cx="6" cy="3.1" r="1.05" fill="#eef0ef"/></svg>
<div class="a" style="left:0;top:629.8px;width:459px;height:34px;background:#b4c0c0"></div>
<div class="a" style="left:0;top:663.8px;width:459px;height:134.20000000000005px;background:#eef0ef"></div>
<div class="t" style="left:16.5px;top:639.95px;font-size:14px;color:#fff;font-weight:bold;">Edge protection</div>
<div class="t" style="left:15.2px;top:686.54px;font-size:13.3px;color:#555;">Cladding:</div>
<div class="t" style="left:204.3px;top:686.54px;font-size:13.3px;color:#555;">Unclad</div>
<div class="a" style="left:204px;top:707.8px;width:197px;height:1px;background:#cfd2d2"></div>
<svg style="left:416.5px;top:690.5999999999999px" width="12" height="12" viewBox="0 0 12 12"><circle cx="6" cy="6" r="5.6" fill="#5e5f5f"/><path d="M5 4.8 L6.9 4.8 L6.9 8.6 L7.7 8.6 L7.7 9.5 L4.5 9.5 L4.5 8.6 L5.3 8.6 L5.3 5.7 L5 5.7 Z" fill="#eef0ef"/><circle cx="6" cy="3.1" r="1.05" fill="#eef0ef"/></svg>
<svg style="left:0;top:0" width="459" height="700"><path d="M393 691.8 L401 691.8 L397 695.8 Z" fill="#555"/></svg>
</div>
<div class="a" style="left:1466px;top:162px;width:7px;height:336px;border-radius:3.5px;background:#ababab"></div>
<div class="a" style="left:0;top:901px;width:1475px;height:72px;background:linear-gradient(#d6d6d6,#f4f4f4 3px,#fff 6px)"></div>
<svg style="left:0;top:0" width="1475" height="973"><rect x="32.3" y="921.2" width="74.5" height="29.2" fill="#db0a1f"/><path d="M55.8 921.2 V950.4 M83.3 921.2 V950.4 M32.3 930.9 H106.8 M32.3 940.4 H106.8" stroke="#f39aa3" stroke-width="0.8"/><rect x="32.8" y="921.7" width="73.5" height="28.2" fill="none" stroke="#f2a0a8" stroke-width="0.8"/></svg>
<div class="t" style="left:34.5px;top:922px;font-size:28px;font-weight:bold;font-style:italic;color:#111;-webkit-text-stroke:0.7px #111;transform:scaleX(0.8) skewX(-9deg);transform-origin:0 100%;margin-left:2px;margin-top:1.5px">CADS</div>
<div class="t" style="left:34.5px;top:922px;font-size:28px;font-weight:bold;font-style:italic;color:#fff;-webkit-text-stroke:0.7px #fff;transform:scaleX(0.8) skewX(-9deg);transform-origin:0 100%">CADS</div>
<div class="t" style="left:117px;top:929.66px;font-size:13.4px;color:#555;">Construction industry software</div>
<div class="t" style="left:1328.8px;top:929.33px;font-size:13.2px;color:#444;">Version 26.0.132</div>
<svg style="left:0;top:0" width="1000" height="250"><path d="M845.1 168.9 H859.5 L865.5 174.9 V192.9 H845.1 Z M858.1 168.9 V175.9 H865.5" stroke="#9bc21f" stroke-width="1.8" fill="none" stroke-linejoin="round"/><path d="M875.8 187 V172.7 Q875.8 170.7 877.8 170.7 H882.3 Q884.3 170.7 884.6 172.4 L884.9 174.1 H893.7 Q895.7 174.1 895.7 176.1 V179.6" stroke="#9bc21f" stroke-width="1.8" fill="none" stroke-linejoin="round"/><path d="M877.3 188.8 H894.8 L900.9 181.6 Q901.8 180.1 900.2 180.1 H883.3 Q882.3 180.1 881.7 180.8 L876.3 187.3 Q875.6 188.8 877.3 188.8 Z" stroke="#9bc21f" stroke-width="1.8" fill="none" stroke-linejoin="round"/><path d="M911 170.4 H926 L931.7 176.1 V191 H911 Z" stroke="#9bc21f" stroke-width="1.7" fill="none" stroke-linejoin="round"/><path d="M913.8 170.4 H924.9 V178.75 H913.8 Z M919.7 171.4 V176.8 H923.4 V171.4 Z" fill="#9bc21f" fill-rule="evenodd"/><path d="M915 191 V183.4 H928 V191" stroke="#9bc21f" stroke-width="1.6" fill="none"/><path d="M943.5 171.3 H958.5 L964.2 177 V192 H943.5 Z" stroke="#9bc21f" stroke-width="1.7" fill="none" stroke-linejoin="round"/><path d="M946.1 171.3 H957.2 V179.8 H946.1 Z M952 172.2 V178 H955.5 V172.2 Z" fill="#9bc21f" fill-rule="evenodd"/><path d="M947.1 192 V184.8 H960.1 V192" stroke="#9bc21f" stroke-width="1.6" fill="none"/><path d="M947.5 190.8 L955.5 182.8" stroke="#9bc21f" stroke-width="2.6"/><path d="M953.6 180.9 L958.4 180.2 L957.5 185 Z" fill="#9bc21f"/><path d="M930.6 218.7 H939.5 L943.5 222.7 V234.7 H930.6 Z M938.7 218.7 V223.4 H943.5" stroke="#9bc21f" stroke-width="1.2" fill="none" stroke-linejoin="round"/><path d="M932.3 226.4 L934.9 232.6 L936.9 227.6 L938.9 232.6 L941.5 226.4" stroke="#9bc21f" stroke-width="1.5" fill="none" stroke-linejoin="round"/><path d="M931.8 226.4 H933.8 M940 226.4 H942" stroke="#9bc21f" stroke-width="1"/><path d="M952.6 218.7 H961.5 L965.5 222.7 V234.7 H952.6 Z M960.6 218.7 V223.4 H965.5" stroke="#9bc21f" stroke-width="1.2" fill="none" stroke-linejoin="round"/><path d="M954.6 232.4 L957.6 228.3 L958.4 223.6 L958.6 228 L963.8 229.6" stroke="#9bc21f" stroke-width="1.1" fill="none" stroke-linejoin="round"/></svg>
</div>
</body></html>
